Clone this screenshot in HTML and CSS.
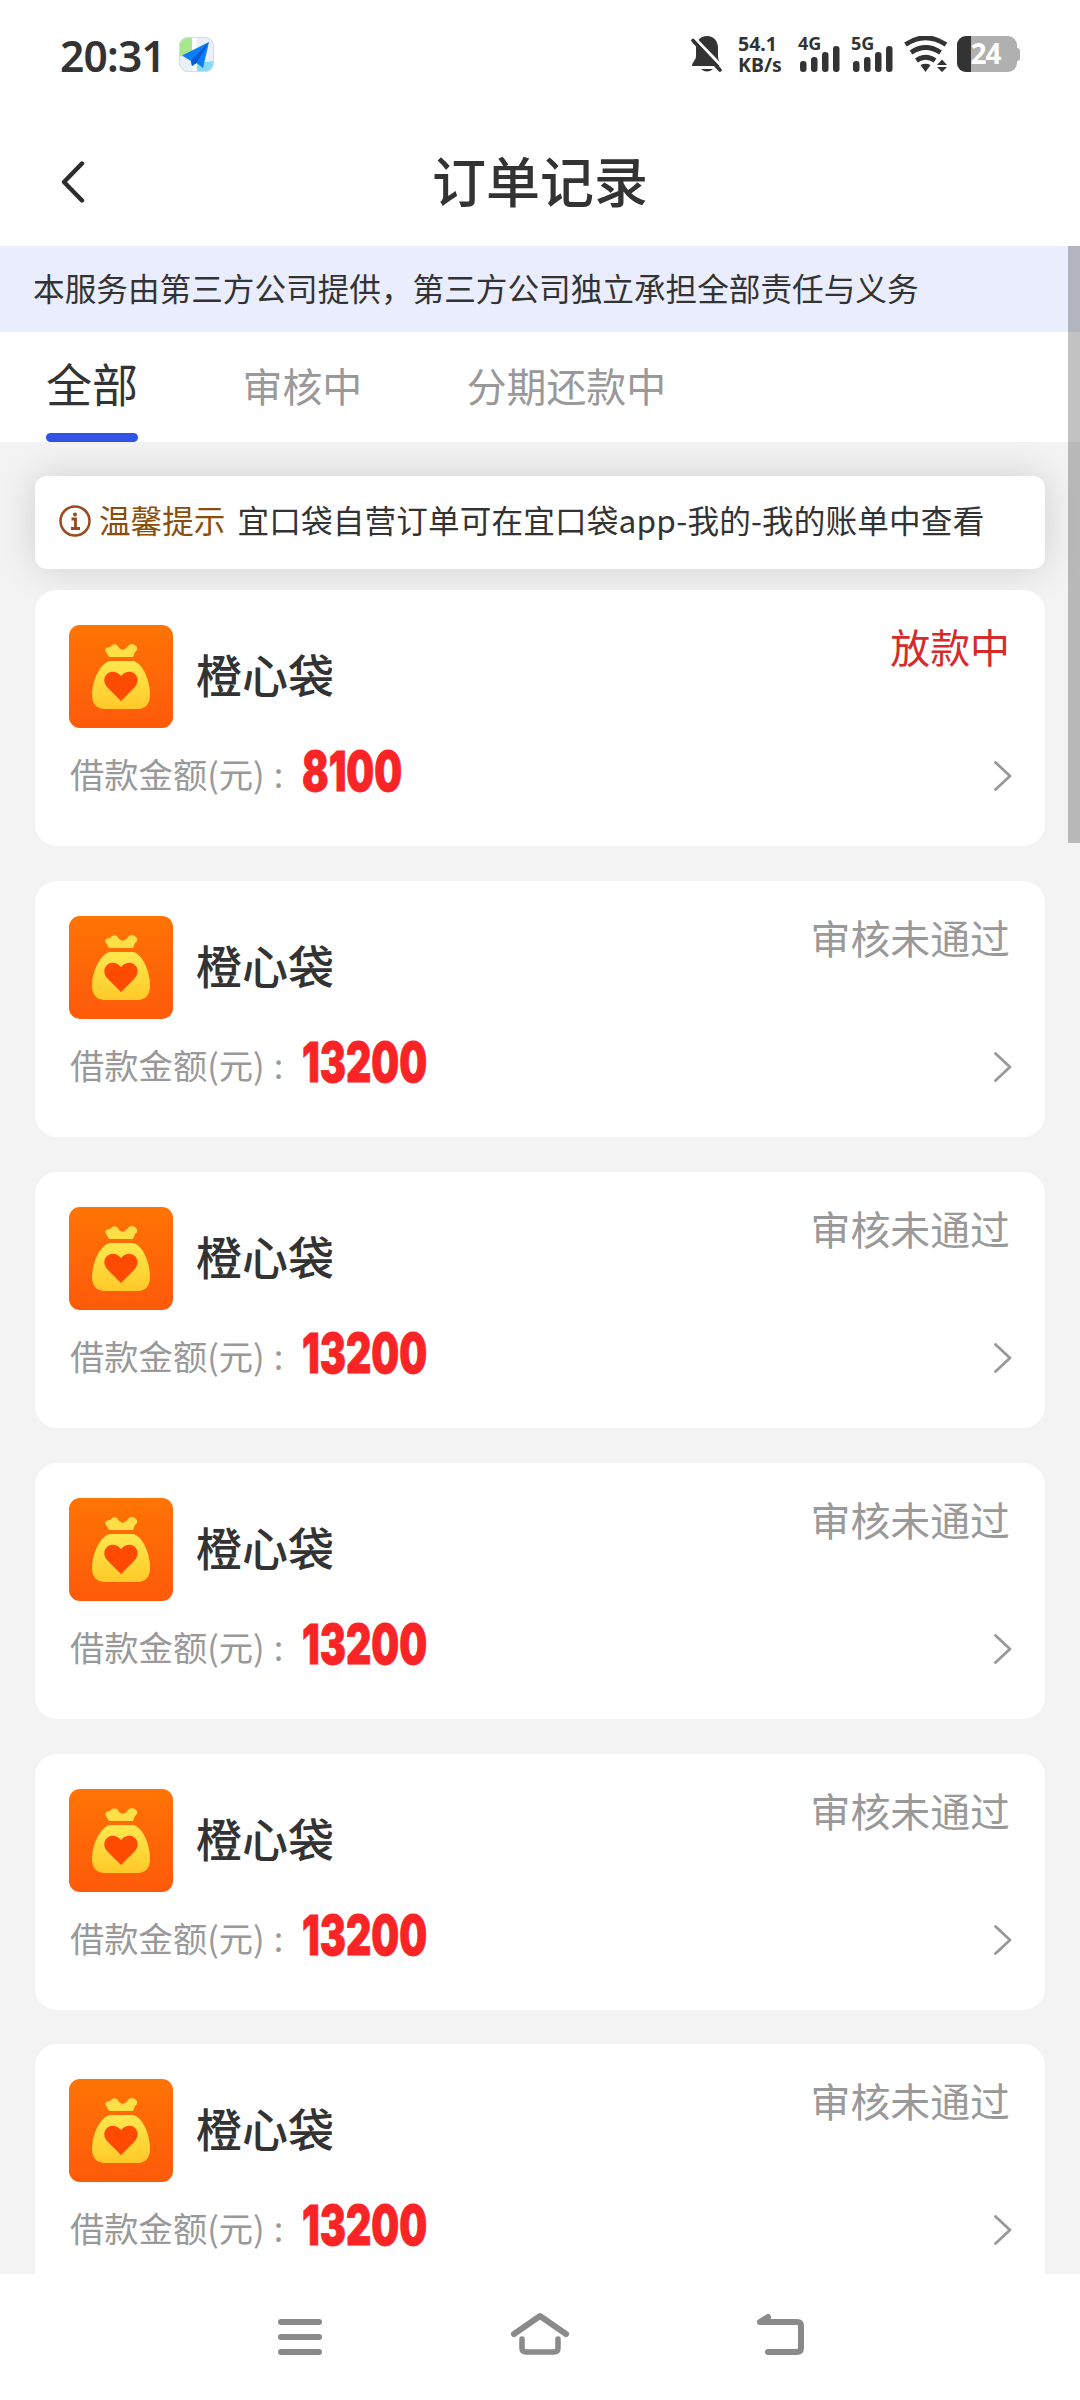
FILE: index.html
```html
<!DOCTYPE html>
<html lang="zh-CN">
<head>
<meta charset="utf-8">
<title>订单记录</title>
<link rel="stylesheet" href="styles.css">
</head>
<body>
<svg class="defs" width="0" height="0" aria-hidden="true">
  <defs>
    <linearGradient id="orange" x1="0" y1="0" x2="0" y2="1"><stop offset="0" stop-color="#ff7404"/><stop offset="1" stop-color="#fe5a0a"/></linearGradient>
    <linearGradient id="gold" x1="0" y1="0" x2="0" y2="1"><stop offset="0" stop-color="#ffe84e"/><stop offset="1" stop-color="#ffc928"/></linearGradient>
    <symbol id="bag" viewBox="0 0 104 103">
      <rect width="104" height="103" rx="11" fill="url(#orange)"/>
      <path d="M40 32 L36 25 Q37 22 41 22 Q44 18 48 20 Q50 24 54 25 Q57 24 60 20 Q64 17 68 22 Q69 25 66 27 L64 32 Z" fill="#ffdf48"/>
      <path d="M41 36 H64 C74 38 81 56 81 70 C81 79 76 84 69 84 H36 C28 84 23 79 23 70 C23 56 31 38 41 36 Z" fill="url(#gold)"/>
      <path d="M52 76 L39 63 C29 53 42 40 52 51 C62 40 75 53 65 63 Z" fill="#ff4a02"/>
    </symbol>
    <symbol id="chevron" viewBox="0 0 18 30"><path d="M1.5 1.5 L16 15 L1.5 28.5" fill="none" stroke="#999" stroke-width="2.8" stroke-linecap="round" stroke-linejoin="round"/></symbol>
    <symbol id="bars" viewBox="0 0 40 26">
      <rect x="0" y="15" width="6.5" height="11" rx="3"/><rect x="11" y="11" width="6.5" height="15" rx="3"/><rect x="22" y="6" width="6.5" height="20" rx="3"/><rect x="33" y="0" width="6.5" height="26" rx="3"/>
    </symbol>
  </defs>
</svg>
<div class="screen">
  <div class="statusbar">
    <span class="clock">20:31</span>
    <svg class="mapicon" viewBox="0 0 35 35">
      <clipPath id="round"><rect width="35" height="35" rx="9"/></clipPath>
      <g clip-path="url(#round)"><rect width="35" height="35" fill="#e9f0f7"/><path d="M0 0H14V14L0 20Z" fill="#a8e78c"/><path d="M13 0H18V35H13Z" fill="#fff"/><path d="M18 26L35 24V35H18Z" fill="#84daf8"/></g>
      <rect x=".5" y=".5" width="34" height="34" rx="8.5" fill="none" stroke="#d5dde2"/>
      <path d="M3 18.5 L30 5 L24 31 L17.500 26 L13 29 L12 24 Z" fill="#0a7df6"/><path d="M12 24L30 5L17.500 26L13 29Z" fill="#0659d8"/>
    </svg>
    <div class="indicators">
      <svg class="bell" viewBox="0 0 32 36"><path d="M16 0C9 0 5 5 5 12V20C5 24 1 26 1 30H29C30 27 27 25 27 20V12C27 5 23 0 16 0Z M10 33H22Q16 38 10 33Z" fill="#333"/><path d="M4 2.500L32 31.500" stroke="#fff" stroke-width="3"/><path d="M2 4.500L29 34" stroke="#333" stroke-width="3.600" stroke-linecap="round"/></svg>
      <div class="speed"><span>54.1</span><span>KB/s</span></div>
      <div class="signal first"><span>4G</span><svg class="bars"><use href="#bars"/></svg></div>
      <div class="signal"><span>5G</span><svg class="bars"><use href="#bars"/></svg></div>
      <svg class="wifi" viewBox="0 0 44 36"><g fill="none" stroke="#333" stroke-width="4.800"><path d="M1.500 8.500Q21.500 -5 42 8.500"/><path d="M7 16.500Q21.500 6.500 36.500 16.500"/><path d="M12.500 24.500Q21.500 18 31 24.500"/></g><path d="M16.500 29Q21.500 26.500 26.500 29L21.500 36Z M33 29L38 23.500L43 29Z M33 31L38 36L43 31Z" fill="#333"/></svg>
      <svg class="battery" viewBox="0 0 63 36"><clipPath id="cell"><rect width="60" height="36" rx="9"/></clipPath><rect x="56" y="12" width="7" height="13" rx="3" fill="#b0b0b0"/><g clip-path="url(#cell)"><rect width="60" height="36" fill="#b0b0b0"/><rect width="14" height="36" fill="#333"/></g><text class="charge" x="13.500" y="28" textLength="31">24</text></svg>
    </div>
  </div>

  <header class="header">
    <svg class="back" viewBox="0 0 24 42"><path d="M21 2.500L3 21L21 39.500" fill="none" stroke="#2c2c2c" stroke-width="4.400" stroke-linecap="round" stroke-linejoin="round"/></svg>
    <h1 class="title">订单记录</h1>
  </header>

  <main class="page">
    <p class="banner">本服务由第三方公司提供，第三方公司独立承担全部责任与义务</p>
    <nav class="tabs"><span class="tab active">全部</span><span class="tab">审核中</span><span class="tab">分期还款中</span></nav>
    <div class="tip">
      <svg class="info" viewBox="0 0 32 32"><circle cx="16" cy="16" r="14.500" fill="none" stroke="#9a4a20" stroke-width="2.500"/><circle cx="16" cy="9.500" r="2" fill="#9a4a20"/><path d="M12.500 14H16.500V23.500M12 23.500H21" fill="none" stroke="#9a4a20" stroke-width="2.800"/></svg>
      <span class="tip-label">温馨提示</span><span class="tip-text">宜口袋自营订单可在宜口袋app-我的-我的账单中查看</span>
    </div>
    <div class="orders">
      <section class="card"><div class="top"><svg class="logo"><use href="#bag"/></svg><h2 class="name">橙心袋</h2><span class="state live">放款中</span></div><div class="bottom"><span class="label">借款金额(元)<i class="colon">:</i></span><b class="amount">8100</b><svg class="go"><use href="#chevron"/></svg></div></section>
      <section class="card"><div class="top"><svg class="logo"><use href="#bag"/></svg><h2 class="name">橙心袋</h2><span class="state">审核未通过</span></div><div class="bottom"><span class="label">借款金额(元)<i class="colon">:</i></span><b class="amount">13200</b><svg class="go"><use href="#chevron"/></svg></div></section>
      <section class="card"><div class="top"><svg class="logo"><use href="#bag"/></svg><h2 class="name">橙心袋</h2><span class="state">审核未通过</span></div><div class="bottom"><span class="label">借款金额(元)<i class="colon">:</i></span><b class="amount">13200</b><svg class="go"><use href="#chevron"/></svg></div></section>
      <section class="card"><div class="top"><svg class="logo"><use href="#bag"/></svg><h2 class="name">橙心袋</h2><span class="state">审核未通过</span></div><div class="bottom"><span class="label">借款金额(元)<i class="colon">:</i></span><b class="amount">13200</b><svg class="go"><use href="#chevron"/></svg></div></section>
      <section class="card"><div class="top"><svg class="logo"><use href="#bag"/></svg><h2 class="name">橙心袋</h2><span class="state">审核未通过</span></div><div class="bottom"><span class="label">借款金额(元)<i class="colon">:</i></span><b class="amount">13200</b><svg class="go"><use href="#chevron"/></svg></div></section>
      <section class="card"><div class="top"><svg class="logo"><use href="#bag"/></svg><h2 class="name">橙心袋</h2><span class="state">审核未通过</span></div><div class="bottom"><span class="label">借款金额(元)<i class="colon">:</i></span><b class="amount">13200</b><svg class="go"><use href="#chevron"/></svg></div></section>
    </div>
    <div class="scrollbar"></div>
  </main>

  <footer class="sysnav">
    <svg class="key" viewBox="0 0 60 50"><path d="M11 11H49M11 26H49M11 41H49" /></svg>
    <svg class="key" viewBox="0 0 60 50"><path d="M4 23L30 5L56 23" stroke-linejoin="round"/><path d="M12 28V37Q12 41 16 41H44Q48 41 48 37V28" stroke-width="5.500"/></svg>
    <svg class="key" viewBox="0 0 60 50"><path d="M18 41H47Q51 41 51 37V15Q51 11 47 11H10L18 6" stroke-linejoin="round"/></svg>
  </footer>
</div>
</body>
</html>
```
FILE: styles.css
```css
* { box-sizing: border-box; }
body { margin: 0; background: #fff; color: #333; font-family: "Noto Sans CJK SC", sans-serif; }
h1, h2, p { margin: 0; font-weight: 400; }
svg { display: block; flex: none; }
.defs { position: absolute; }
.screen { width: 1080px; height: 2400px; display: flex; flex-direction: column; overflow: hidden; }

.statusbar { height: 108px; padding: 0 60px 0 60px; display: flex; align-items: center; flex: none; }
.clock { width: 119px; padding-top: 3px; font: 600 42.500px/105px "Noto Sans", sans-serif; letter-spacing: -.8px; white-space: nowrap; }
.mapicon { width: 35px; height: 35px; }
.indicators { margin-left: auto; height: 36px; display: flex; }
.bell { width: 32px; height: 36px; }
.speed { width: 44px; margin-left: 15px; display: flex; flex-direction: column; font: 700 19.500px/21px "Noto Sans", sans-serif; margin-top: -3px; }
.speed span { white-space: nowrap; }
.signal { width: 53px; display: flex; flex-direction: column; }
.signal.first { margin-left: 16px; }
.signal span { height: 11px; font: 700 18px/14px "Noto Sans", sans-serif; }
.bars { width: 40px; height: 26px; margin-left: 2px; fill: #333; margin-top: -1px; }
.wifi { width: 44px; height: 36px; }
.battery { width: 63px; height: 36px; margin-left: 9px; overflow: visible; }
.charge { font: 700 28px "Noto Sans", sans-serif; fill: #fff; }

.header { height: 138px; flex: none; padding: 0 61px; display: flex; align-items: center; }
.back { width: 24px; height: 42px; margin-top: 9px; }
.title { flex: 1; margin: 5px 24px 0 0; text-align: center; font-size: 54px; line-height: 80px; font-weight: 500; }

.page { position: relative; flex: 1; min-height: 0; overflow: hidden; background: #f3f3f3; }
.banner { height: 86px; padding-left: 33px; background: #eaedfd; font-size: 31.640px; line-height: 83px; font-weight: 400; white-space: nowrap; }
.tabs { position: relative; z-index: 1; height: 110px; padding-left: 46px; display: flex; gap: 104.500px; background: #fff; }
.tab { font-size: 39.900px; line-height: 106px; color: #999; }
.tab.active { font-size: 46px; line-height: 101px; color: #333; display: flex; flex-direction: column; }
.tab.active::after { content: ""; height: 9px; border-radius: 5px; background: #3152e2; }

.tip { height: 93px; margin: 34px 35px 21px; padding-left: 24px; display: flex; align-items: flex-start; border-radius: 12px; background: #fff; box-shadow: 0 0 38px rgba(0, 0, 0, .15); font-size: 31.600px; line-height: 86px; white-space: nowrap; }
.info { width: 32px; height: 32px; margin-top: 29px; }
.tip-label { margin-left: 8px; color: #8a4d0c; }
.tip-text { margin-left: 12px; letter-spacing: .17px; }

.orders { position: relative; margin: 0 35px; display: flex; flex-direction: column; gap: 34.900px; }
.card { height: 256px; flex: none; padding: 35px 35px 0 34px; border-radius: 22px; background: #fff; }
.top { display: flex; height: 103px; }
.logo { width: 104px; height: 103px; }
.name { margin-left: 23px; font-size: 46px; line-height: 96px; font-weight: 500; }
.state { margin-left: auto; font-size: 39.900px; line-height: 42px; color: #999; }
.state.live { color: #d82a2a; }
.bottom { display: flex; height: 96px; align-items: center; }
.label { width: 233px; padding-left: 1px; margin-top: -6px; font-size: 34.300px; color: #999; white-space: nowrap; }
.colon { font-style: normal; margin-left: 9px; }
.amount { font: 900 54.500px/80px Inter, sans-serif; color: #f92426; -webkit-text-stroke: .8px #f92426; transform: scaleX(.72); transform-origin: left; margin-top: -10px; }
.go { width: 18px; height: 30px; margin-left: auto; margin-right: -2px; }
.scrollbar { position: absolute; z-index: 2; right: 0; top: 0; width: 12px; height: 597px; background: rgba(0, 0, 0, .24); }

.sysnav { height: 126px; flex: none; padding: 37px 270px 0; display: flex; justify-content: space-between; background: #fff; }
.key { width: 60px; height: 50px; fill: none; stroke: #8a8a8a; stroke-width: 6; stroke-linecap: round; }
```
